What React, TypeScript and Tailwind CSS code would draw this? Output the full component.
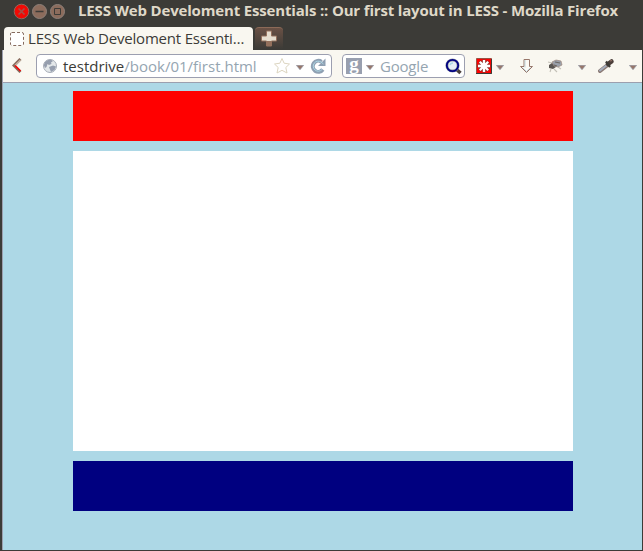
import React from "react";

const Caret = ({ className = "" }: { className?: string }) => (
  <svg width="8" height="5" viewBox="0 0 8 5" className={`relative top-px shrink-0 ${className}`}>
    <path d="M0.3 0.3H7.7L4 4.800Z" fill="#97766a" stroke="#8f97a8" strokeWidth="0.6" />
  </svg>
);

function WindowButtons() {
  return (
    <svg width="54" height="17" viewBox="0 0 54 17" className="shrink-0">
      <circle cx="8.500" cy="8.500" r="7.300" fill="#f00a05" stroke="#8d6a60" />
      <path d="M5.500 5.500L11.500 11.500M11.500 5.500L5.500 11.500" stroke="#a45048" strokeWidth="1.600" />
      <circle cx="26.500" cy="8.500" r="7" fill="#8c6c5c" stroke="#8d8079" />
      <path d="M22.500 8.500H30.500" stroke="#3c3b37" strokeWidth="1.500" />
      <circle cx="44.500" cy="8.500" r="7" fill="#8c6c5c" stroke="#8d8079" />
      <path d="M41.500 5.500H47.500V11.500H41.500Z" fill="none" stroke="#3c3b37" />
    </svg>
  );
}

function TitleBar() {
  return (
    <header className="flex h-[27px] items-start pl-[13px] pt-[3px]">
      <WindowButtons />
      <h1 className="ml-[11px] -mt-[4px] whitespace-nowrap text-[15px] font-bold leading-[22px] tracking-[-0.17px] text-[#dfd8c8]">
        LESS Web Develoment Essentials :: Our first layout in LESS - Mozilla Firefox
      </h1>
    </header>
  );
}

function TabStrip() {
  return (
    <div className="flex h-[23px] items-start pl-[4px]">
      <div className="flex h-[23px] w-[249px] items-center rounded-t-[4px] bg-[#f9f7f0] pl-[6px] text-[#3c3b37]">
        <svg width="14" height="14" viewBox="0 0 14 14" className="shrink-0">
          <rect x="0.500" y="0.500" width="13" height="13" rx="1.500" fill="#fff" stroke="#856a5e" strokeDasharray="3 2" />
        </svg>
        <span className="mb-[2px] ml-[4px] whitespace-nowrap text-[15px] leading-[20px] tracking-[-0.2px]">LESS Web Develoment Essenti…</span>
      </div>
      <div className="ml-[2px] flex h-[22px] w-[28px] justify-center rounded-t-[4px] border-t border-[#8c6a58] bg-[linear-gradient(#6a5145,#3c3b37)] pt-[2px]">
        <svg width="16" height="17" viewBox="0 0 16 17">
          <path d="M5.500 1H10.500V6H15.500V11H10.500V16H5.500V11H0.500V6H5.500Z" fill="#e5ddce" stroke="#93705c" />
          <path d="M5.500 11H10.500V16H5.500Z" fill="#93705c" />
        </svg>
      </div>
    </div>
  );
}

function Globe() {
  return (
    <svg width="14" height="14" viewBox="0 0 14 14" className="shrink-0">
      <circle cx="7" cy="7" r="6.500" fill="#e4e8ea" stroke="#a7adb7" />
      <path d="M0.800 6L2 3L5 1L8 0.800L10 2L8 3.500L8.500 5L6 6L4.500 5L3.500 8L2 9ZM6 8L10 6.500L13 7.500L11.500 11L8 13L7 10.500Z" fill="#969eae" />
    </svg>
  );
}

function Star() {
  return (
    <svg width="16" height="16" viewBox="0 0 16 16" className="shrink-0">
      <path d="M8 0.500L10.100 5.200L15.500 6L11.800 9.500L13 15L8 12.300L3 15L4.200 9.500L0.500 6L5.900 5.200Z" fill="#fff" stroke="#dcd5c0" />
    </svg>
  );
}

function Reload() {
  return (
    <svg width="16" height="16" viewBox="0 0 16 16" className="ml-[6px] shrink-0">
      <path d="M12.800 11.500A5.500 5.500 0 1 1 11.500 3.800" fill="none" stroke="#8fa0b3" strokeWidth="4" />
      <path d="M15.500 0.500V8H8Z" fill="#8fa0b3" />
      <path d="M12 11.500A5 5 0 1 1 11 4L13.500 6" fill="none" stroke="#add8e6" strokeWidth="1" />
    </svg>
  );
}

function Magnifier() {
  return (
    <svg width="17" height="17" viewBox="0 0 17 17" className="ml-auto mr-[2px] shrink-0">
      <path d="M11 11L15.500 15" stroke="#4a403c" strokeWidth="3.500" />
      <circle cx="7.500" cy="7.500" r="5.600" fill="#e6eff5" stroke="#989fad" strokeWidth="3" />
      <circle cx="7.500" cy="7.500" r="5.700" fill="none" stroke="#000080" strokeWidth="1.800" />
      <path d="M5 7Q5.500 5 8 5" fill="none" stroke="#add8e6" strokeWidth="1.300" />
    </svg>
  );
}

function NavigationBar() {
  return (
    <nav className="flex h-[33px] shrink-0 items-start border-b border-[#9c9fae] bg-[#f9f7f0] pt-[4px]">
      <svg width="10" height="15" viewBox="0 0 10 15" className="ml-[9px] mt-[4px] shrink-0">
        <path d="M8.500 1L2 7.500L8.500 14" fill="none" stroke="#886a5d" strokeWidth="3" />
        <path d="M8.500 2L3 7.500" fill="none" stroke="#c8b8a8" strokeWidth="1.200" />
        <path d="M3 7.500L8.500 13" fill="none" stroke="#ff0000" strokeWidth="1.600" />
      </svg>
      <div className="ml-[14px] flex h-[24px] w-[296px] items-center rounded-[4px] border border-[#9c9fb0] bg-white pl-[6px]">
        <Globe />
        <span className="ml-[6px] w-[211px] whitespace-nowrap text-[15px] leading-[22px] text-[#3c3b37]">
          testdrive<span className="text-[#95a5b1]">/book/01/first.html</span>
        </span>
        <Star />
        <Caret className="ml-[6px]" />
        <Reload />
      </div>
      <div className="ml-[10px] flex h-[24px] w-[123px] items-center rounded-[4px] border border-[#9c9fb0] bg-white pl-[3px]">
        <span className="h-4 w-4 bg-[#989faf] text-center font-['Liberation_Serif',serif] text-[19px] font-bold leading-[12px] text-white">g</span>
        <Caret className="ml-[4px]" />
        <span className="ml-[6px] text-[15px] leading-[22px] tracking-[-0.2px] text-[#95a5b1]">Google</span>
        <Magnifier />
      </div>
      <div className="flex h-[24px] items-center pl-[11px]">
        <svg width="16" height="16" viewBox="0 0 16 16" className="shrink-0">
          <path d="M0.500 0.500H15.500V15.500H0.500Z" fill="#ff0000" stroke="#9b5144" />
          <path d="M0 15.500H15.500V1" fill="none" stroke="#3c3b37" />
          <path d="M8 1.500V14.500M1.500 8H14.500M3.500 3.500L12.500 12.500M12.500 3.500L3.500 12.500" stroke="#8b3a34" strokeWidth="3.600" />
          <path d="M8 2V14M2 8H14M3.800 3.800L12.200 12.200M12.200 3.800L3.800 12.200" stroke="#fff" strokeWidth="2.300" />
        </svg>
        <Caret className="ml-[4px]" />
        <svg width="15" height="16" viewBox="0 0 15 16" className="ml-[15px] shrink-0">
          <path d="M5 1.500H10.500V8.500H13.500L7.500 14.500L1.500 8.500H5Z" fill="#fcfaf5" stroke="#97766a" strokeLinejoin="round" />
          <path d="M6 2V9.500M3.500 9.500L7.500 13.500L11.500 9.500" fill="none" stroke="#b4ced7" strokeWidth="0.800" />
        </svg>
        <svg width="17" height="16" viewBox="0 0 17 16" className="ml-[13px] shrink-0">
          <path d="M1 4L5 5M4 11L3 14M7 11L10 14M11 9L14 11" stroke="#c4c1b8" strokeWidth="1.100" />
          <path d="M2 7L5 5L9 7L9 9L6 11L2 10Z" fill="#5a5652" />
          <path d="M5 4L9 2L14 3L15 7L11 9L7 8Z" fill="#9aa0aa" stroke="#9c877c" strokeWidth="0.700" />
          <path d="M8 4L13 5M7 7L10 8" stroke="#6b6662" strokeWidth="1.200" />
        </svg>
        <Caret className="ml-[14px]" />
        <svg width="17" height="16" viewBox="0 0 17 16" className="ml-[12px] shrink-0">
          <path d="M2 13L9 7.500" stroke="#8b7a75" strokeWidth="4" strokeLinecap="round" />
          <path d="M2 12.500L9 7" stroke="#a4adbc" strokeWidth="2" strokeLinecap="round" />
          <path d="M10 6L13.500 3.500" stroke="#4c3f3a" strokeWidth="4.500" strokeLinecap="round" />
          <path d="M8 3.500L12 9" stroke="#3c3b37" strokeWidth="2.200" />
          <path d="M12 3L14 2.500" stroke="#97766a" strokeWidth="1.200" />
        </svg>
        <Caret className="ml-[14px]" />
      </div>
    </nav>
  );
}

export default function App() {
  return (
    <div className="flex h-[551px] w-[643px] flex-col overflow-hidden bg-[#3c3b37] font-['Open_Sans',sans-serif]">
      <TitleBar />
      <TabStrip />
      <div className="ml-[2px] mr-px flex h-[500px] flex-col border-l border-[#9c9fae] bg-[#add8e6]">
        <NavigationBar />
        <main className="ml-[70px] mt-[8px] flex w-[500px] flex-col gap-[10px]">
          <div className="h-[50px] bg-[#ff0000]" />
          <div className="h-[300px] bg-white" />
          <div className="h-[50px] bg-[#000080]" />
        </main>
      </div>
    </div>
  );
}
